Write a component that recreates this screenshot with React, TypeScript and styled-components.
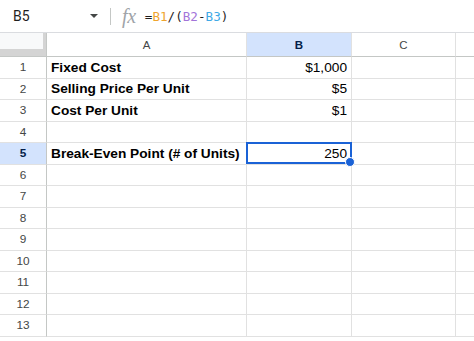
import React from 'react';
import styled, { createGlobalStyle } from 'styled-components';

const Global = createGlobalStyle`
  html, body { margin: 0; padding: 0; background: #fff; }
  body { font-family: "Liberation Sans", Arial, sans-serif; }
`;

const Page = styled.div`
  width: 474px;
  height: 341px;
  overflow: hidden;
  background: #fff;
`;

const FormulaBar = styled.div`
  display: flex;
  align-items: center;
  height: 32px;
  border-bottom: 1px solid #dadce0;
`;

const NameBox = styled.div`
  width: 77px;
  padding-left: 13px;
  font-family: Roboto, "Liberation Sans", sans-serif;
  font-size: 14px;
  color: #1f1f1f;
`;

const Caret = styled.span`
  width: 0;
  height: 0;
  border-left: 4px solid transparent;
  border-right: 4px solid transparent;
  border-top: 4.5px solid #444746;
`;

const Separator = styled.span`
  width: 1px;
  height: 17px;
  margin-left: 12px;
  background: #c4c7c5;
`;

const FxIcon = styled.span`
  margin-left: 11px;
  font-family: "Liberation Serif", serif;
  font-style: italic;
  font-size: 20px;
  letter-spacing: -0.3px;
  color: #a0a4a8;
  line-height: 1;
`;

const Formula = styled.div`
  margin-left: 9px;
  font-family: "DejaVu Sans Mono", monospace;
  font-size: 12.6px;
  color: #1f1f1f;
`;

const Ref = styled.span<{ $color: string }>`
  color: ${(p) => p.$color};
`;

const COLS = '47px 200px 105px 104px 1fr';

const Row = styled.div<{ $header?: boolean }>`
  display: grid;
  grid-template-columns: ${COLS};
  height: ${(p) => (p.$header ? '24px' : '21.5px')};
`;

const Corner = styled.div`
  box-sizing: border-box;
  display: flex;
  background: #d4d4d4;
  padding: 0 3px 7px 0;
  border-right: 1px solid #c4c7c5;
  border-bottom: 1px solid #c4c7c5;
`;

const CornerFill = styled.div`
  flex: 1;
  background: #f8f9fa;
`;

const ColHeader = styled.div<{ $selected?: boolean; $last?: boolean }>`
  box-sizing: border-box;
  display: flex;
  align-items: center;
  justify-content: center;
  border-right: ${(p) => (p.$last ? 'none' : '1px solid #e1e1e1')};
  border-bottom: 1px solid #c4c7c5;
  background: ${(p) => (p.$selected ? '#d3e3fd' : '#fff')};
  color: ${(p) => (p.$selected ? '#041e49' : '#444746')};
  font-weight: ${(p) => (p.$selected ? 700 : 400)};
  font-size: 11.5px;
`;

const RowHeader = styled.div<{ $selected?: boolean }>`
  box-sizing: border-box;
  display: flex;
  align-items: center;
  justify-content: center;
  border-right: 1px solid #c4c7c5;
  border-bottom: 1px solid #e1e1e1;
  background: ${(p) => (p.$selected ? '#d3e3fd' : '#fff')};
  color: ${(p) => (p.$selected ? '#041e49' : '#444746')};
  font-weight: ${(p) => (p.$selected ? 700 : 400)};
  font-size: 11.8px;
`;

const Cell = styled.div<{ $bold?: boolean; $right?: boolean; $last?: boolean }>`
  position: relative;
  box-sizing: border-box;
  display: flex;
  align-items: center;
  justify-content: ${(p) => (p.$right ? 'flex-end' : 'flex-start')};
  padding: 0 4px;
  border-right: ${(p) => (p.$last ? 'none' : '1px solid #e1e1e1')};
  border-bottom: 1px solid #e1e1e1;
  font-size: 13.7px;
  font-weight: ${(p) => (p.$bold ? 700 : 400)};
  color: #000;
  white-space: nowrap;
`;

const Selection = styled.div`
  position: absolute;
  top: -1px;
  left: -1px;
  right: -1px;
  bottom: 0;
  border: 2px solid #1a62d6;
  pointer-events: none;
`;

const FillHandle = styled.div`
  position: absolute;
  right: -5px;
  bottom: -5px;
  width: 8px;
  height: 8px;
  border-radius: 50%;
  background: #1a62d6;
  border: 1px solid #fff;
  z-index: 2;
`;

type RowData = { a?: string; b?: string };

const data: RowData[] = [
  { a: 'Fixed Cost', b: '$1,000' },
  { a: 'Selling Price Per Unit', b: '$5' },
  { a: 'Cost Per Unit', b: '$1' },
  {},
  { a: 'Break-Even Point (# of Units)', b: '250' },
  {}, {}, {}, {}, {}, {}, {}, {},
];

export default function App() {
  return (
    <Page>
      <Global />
      <FormulaBar>
        <NameBox>B5</NameBox>
        <Caret />
        <Separator />
        <FxIcon>fx</FxIcon>
        <Formula>
          =<Ref $color="#efa52e">B1</Ref>/(<Ref $color="#a374d9">B2</Ref>-<Ref $color="#3fa9e6">B3</Ref>)
        </Formula>
      </FormulaBar>
      <Row $header>
        <Corner>
          <CornerFill />
        </Corner>
        <ColHeader>A</ColHeader>
        <ColHeader $selected>B</ColHeader>
        <ColHeader>C</ColHeader>
        <ColHeader $last />
      </Row>
      {data.map((r, i) => {
        const selected = i === 4;
        return (
          <Row key={i}>
            <RowHeader $selected={selected}>{i + 1}</RowHeader>
            <Cell $bold>{r.a}</Cell>
            <Cell $right>
              {r.b}
              {selected && (
                <Selection>
                  <FillHandle />
                </Selection>
              )}
            </Cell>
            <Cell />
            <Cell $last />
          </Row>
        );
      })}
    </Page>
  );
}
